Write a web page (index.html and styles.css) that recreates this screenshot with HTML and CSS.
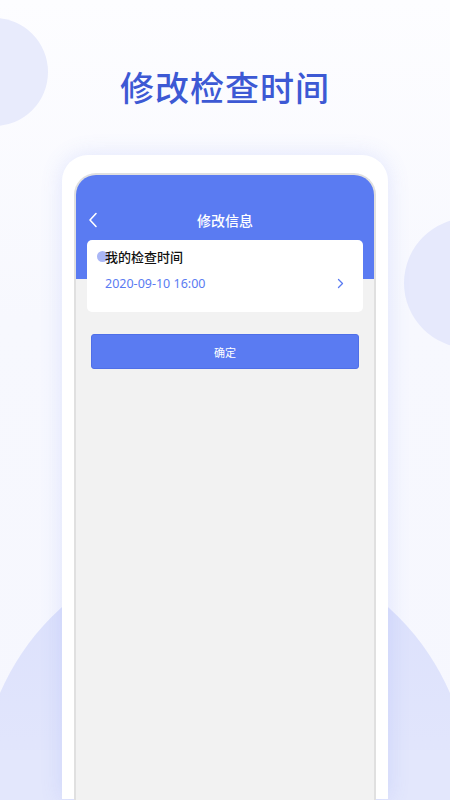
FILE: index.html
```html
<!DOCTYPE html>
<html lang="zh-CN">
<head>
    <meta charset="UTF-8">
    <meta name="viewport" content="width=device-width, initial-scale=1.0">
    <title>修改检查时间</title>
    <link rel="stylesheet" href="styles.css">
</head>
<body>
    <div class="page">
        <div class="bubble bubble-left"></div>
        <div class="bubble bubble-right"></div>
        <div class="bubble bubble-bottom"></div>
        <div class="floor"></div>

        <h1 class="headline">修改检查时间</h1>

        <div class="phone">
            <div class="screen">
                <div class="nav-bar">
                    <svg class="back" width="10" height="16" viewBox="0 0 10 16">
                        <polyline points="8,1.5 2,8 8,14.5" fill="none" stroke="#fff" stroke-width="1.6" stroke-linecap="round" stroke-linejoin="round"/>
                    </svg>
                    <span class="nav-title">修改信息</span>
                </div>

                <div class="card">
                    <div class="card-label">
                        <span class="dot"></span>
                        <span class="label-text">我的检查时间</span>
                    </div>
                    <div class="card-row">
                        <span class="date">2020-09-10 16:00</span>
                        <svg class="arrow" width="7" height="11" viewBox="0 0 7 11">
                            <polyline points="1.5,1.5 5.5,5.5 1.5,9.5" fill="none" stroke="#5a7bf2" stroke-width="1.3" stroke-linecap="round" stroke-linejoin="round"/>
                        </svg>
                    </div>
                </div>

                <div class="confirm">确定</div>
            </div>
        </div>
    </div>
</body>
</html>
```

FILE: styles.css
```css
body {
    margin: 0;
    font-family: "Noto Sans CJK SC", "Noto Sans", sans-serif;
}
.page {
    position: relative;
    width: 450px;
    height: 800px;
    overflow: hidden;
    background: linear-gradient(180deg, #fdfdff 0%, #f7f8fe 40%, #f6f7fe 100%);
}

/* background decoration */
.bubble {
    position: absolute;
    border-radius: 50%;
}
.bubble-left {
    left: -60px;
    top: 18px;
    width: 108px;
    height: 108px;
    background: #e8ebfc;
}
.bubble-right {
    left: 404px;
    top: 218px;
    width: 130px;
    height: 130px;
    background: #e6e9fc;
}
.bubble-bottom {
    left: -20px;
    top: 545px;
    width: 490px;
    height: 490px;
    background: linear-gradient(180deg, #dbe0fc 0%, #e1e5fc 40%, #e4e8fc 100%);
}
.floor {
    position: absolute;
    left: 0;
    right: 0;
    top: 750px;
    bottom: 0;
    background: #e3e7fc;
}

.headline {
    position: relative;
    margin: 0;
    padding-top: 68px;
    font-size: 34px;
    line-height: 38px;
    font-weight: 500;
    letter-spacing: 1px;
    text-align: center;
    color: #3d59d4;
}

.phone {
    position: relative;
    margin: 49px 62px 0;
    height: 626px;
    padding: 18px 12px 0;
    background: #fff;
    border-radius: 26px 26px 0 0;
    box-shadow: 0 0 22px rgba(96, 116, 240, 0.16);
}
.screen {
    height: 100%;
    border: 2px solid #e0e0e0;
    border-bottom: none;
    border-radius: 22px 22px 0 0;
    background: linear-gradient(180deg, #5a7bf2 104px, #f2f2f2 104px);
    overflow: hidden;
}

.nav-bar {
    position: relative;
    margin-top: 25px;
    height: 40px;
    display: flex;
    align-items: center;
    justify-content: center;
}
.back {
    position: absolute;
    left: 12px;
    top: 12px;
}
.nav-title {
    color: #fff;
    font-size: 14px;
    font-weight: 500;
}

.card {
    margin: 0 11px;
    height: 72px;
    padding: 6px 18px 0;
    box-sizing: border-box;
    background: #fff;
    border-radius: 5px;
}
.card-label {
    position: relative;
    height: 18px;
    line-height: 18px;
}
.dot {
    position: absolute;
    left: -8px;
    top: 5px;
    width: 11px;
    height: 11px;
    border-radius: 50%;
    background: #a9b6f6;
}
.label-text {
    position: relative;
    font-size: 13px;
    font-weight: 500;
    color: #111;
}
.card-row {
    margin-top: 10px;
    display: flex;
    align-items: center;
    justify-content: space-between;
    height: 18px;
}
.date {
    font-family: "Noto Sans", sans-serif;
    font-size: 12.5px;
    color: #5a7bf2;
}
.arrow {
    margin-right: 1px;
}

.confirm {
    margin: 22px 15px 0;
    height: 35px;
    line-height: 35px;
    text-align: center;
    font-size: 11px;
    color: #fff;
    background: #5a7bf2;
    border: 1px solid #4f6fe8;
    box-sizing: border-box;
    border-radius: 3px;
}
```
